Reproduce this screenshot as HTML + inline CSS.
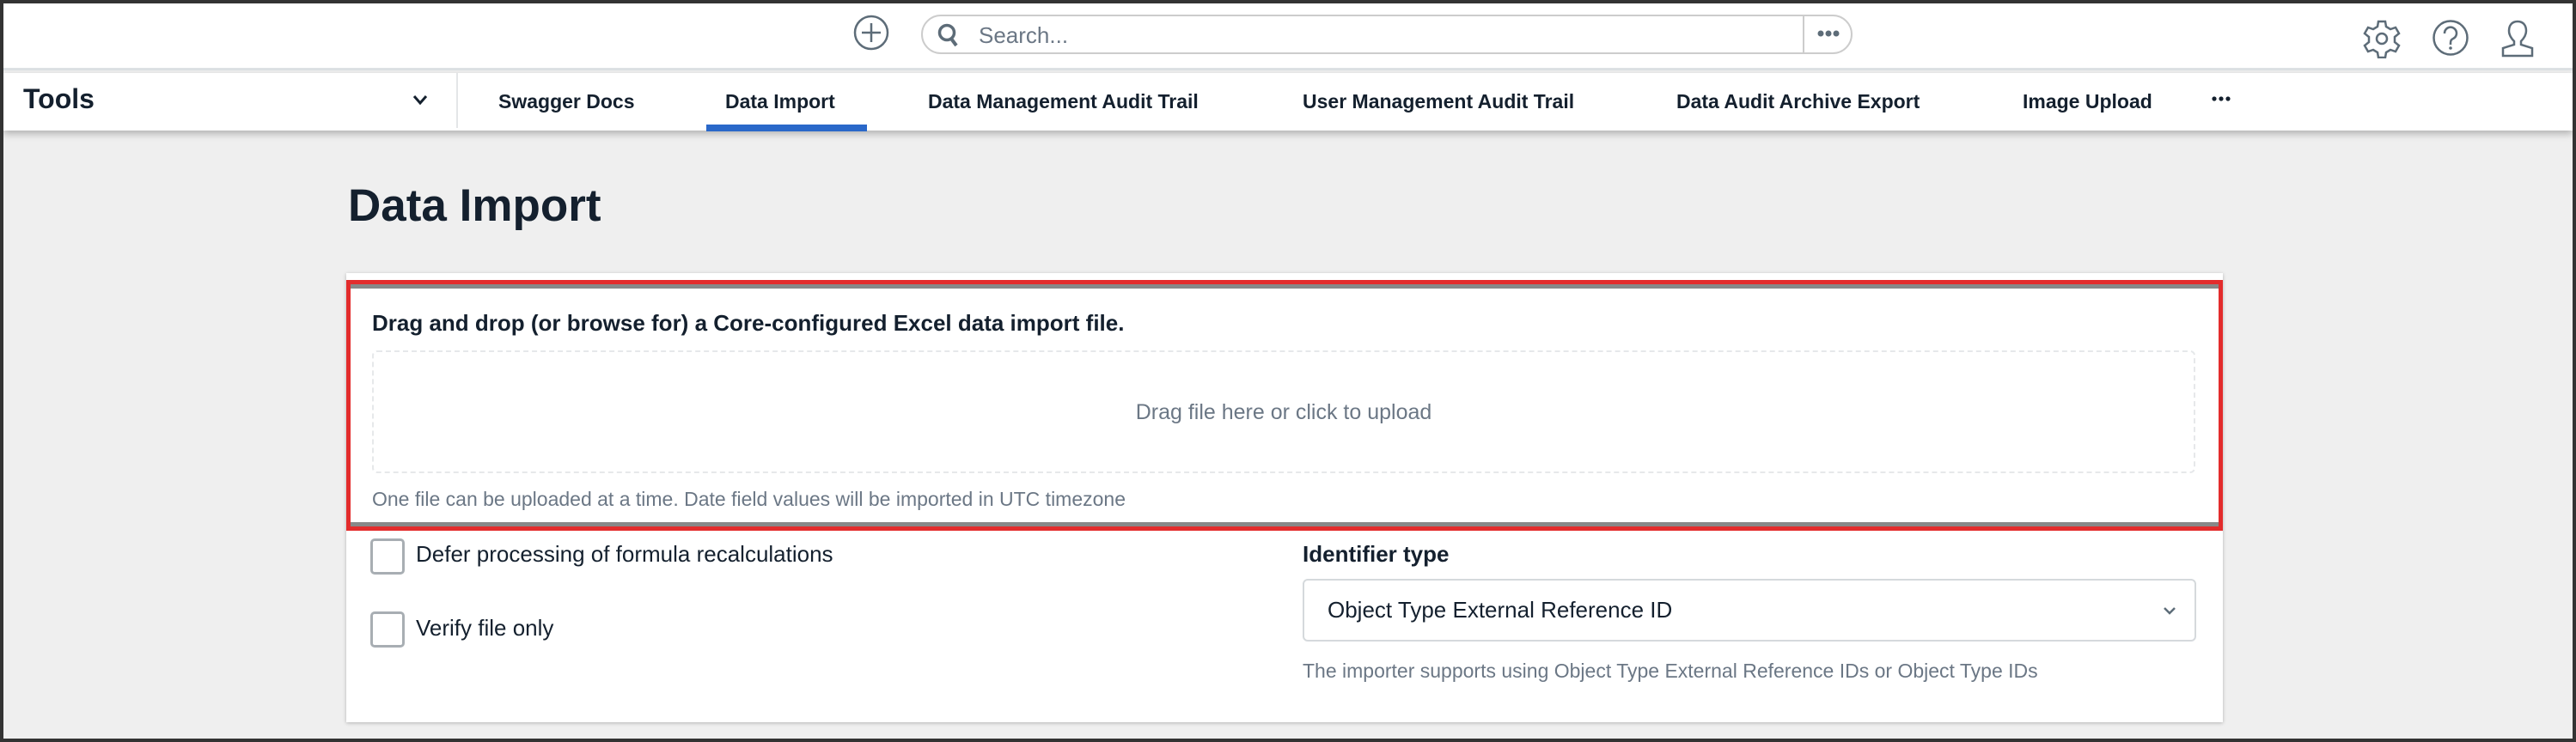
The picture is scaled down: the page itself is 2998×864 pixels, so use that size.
<!DOCTYPE html>
<html><head><meta charset="utf-8"><style>
*{margin:0;padding:0;box-sizing:border-box}
body{width:2998px;height:864px;overflow:hidden;font-family:"Liberation Sans",sans-serif;background:#333;position:relative}
.frame{position:absolute;left:4px;top:4px;width:2990px;height:856px;background:#efefef;overflow:hidden}
.hdr{position:absolute;left:0;top:0;width:100%;height:78px;background:#fff;border-bottom:3px solid #dde1e4}
.nav{position:absolute;left:0;top:81px;width:100%;height:67px;background:#fff;box-shadow:0 4px 8px rgba(0,0,0,.25)}
.abs{position:absolute}
.ni{position:absolute;top:20px;font-size:23px;font-weight:bold;color:#14202e;white-space:nowrap}
.card{position:absolute;left:399px;top:314px;width:2184px;height:523px;background:#fff;box-shadow:0 1px 4px rgba(0,0,0,.25)}
</style></head><body>
<div class="frame">
<div class="hdr">
  <svg class="abs" style="left:989px;top:13px" width="42" height="42" viewBox="0 0 42 42"><circle cx="21" cy="21" r="19" fill="none" stroke="#5d6c78" stroke-width="2.5"/><path d="M21 10v22M10 21h22" stroke="#5d6c78" stroke-width="2.5"/></svg>
  <div class="abs" style="left:1068px;top:13px;width:1084px;height:46px;border:2px solid #ccc;border-radius:23px;background:#fff"></div>
  <div class="abs" style="left:2094px;top:15px;width:2px;height:42px;background:#ccc"></div>
  <svg class="abs" style="left:1086px;top:22px" width="28" height="30" viewBox="0 0 28 30"><circle cx="12" cy="12" r="8.5" fill="none" stroke="#5d6c78" stroke-width="3.5"/><path d="M17 19l6 8" stroke="#5d6c78" stroke-width="4"/></svg>
  <div class="abs" style="left:1135px;top:22px;font-size:26px;color:#6b7785">Search...</div>
  <svg class="abs" style="left:2110px;top:28px" width="28" height="14" viewBox="0 0 28 14"><circle cx="5" cy="7" r="3.5" fill="#5d6c78"/><circle cx="14" cy="7" r="3.5" fill="#5d6c78"/><circle cx="23" cy="7" r="3.5" fill="#5d6c78"/></svg>
  <svg class="abs" style="left:2746px;top:18px" width="44" height="46" viewBox="0 0 44 46"><path d="M18 3h8l1 6 5 3 6-2 4 7-5 4v6l5 4-4 7-6-2-5 3-1 6h-8l-1-6-5-3-6 2-4-7 5-4v-6l-5-4 4-7 6 2 5-3z" fill="none" stroke="#5d6c78" stroke-width="2.5"/><circle cx="22" cy="23" r="6" fill="none" stroke="#5d6c78" stroke-width="2.5"/></svg>
  <svg class="abs" style="left:2826px;top:18px" width="44" height="44" viewBox="0 0 44 44"><circle cx="22" cy="22" r="19.5" fill="none" stroke="#5d6c78" stroke-width="2.5"/><path d="M15 17a7 7 0 1 1 10 6c-2 1-3 2-3 5v2" fill="none" stroke="#5d6c78" stroke-width="2.5"/><circle cx="22" cy="34" r="1.8" fill="#5d6c78"/></svg>
  <svg class="abs" style="left:2904px;top:18px" width="44" height="46" viewBox="0 0 44 46"><path d="M22 3c-7 0-10 5-10 11 0 5 3 9 6 12v4L5 34v9h34v-9l-13-4v-4c3-3 6-7 6-12 0-6-3-11-10-11z" fill="none" stroke="#5d6c78" stroke-width="2.5"/></svg>
</div>
<div class="nav">
  <div class="abs" style="left:23px;top:12px;font-size:32px;font-weight:bold;color:#14202e">Tools</div>
  <svg class="abs" style="left:476px;top:24px" width="18" height="14" viewBox="0 0 18 14"><path d="M2 3l7 8 7-8" fill="none" stroke="#14202e" stroke-width="3"/></svg>
  <div class="abs" style="left:527px;top:0;width:2px;height:64px;background:#e4e6e8"></div>
  <div class="ni" style="left:576px">Swagger Docs</div>
  <div class="ni" style="left:840px">Data Import</div>
  <div class="abs" style="left:818px;top:60px;width:187px;height:8px;background:#2a68c9"></div>
  <div class="ni" style="left:1076px">Data Management Audit Trail</div>
  <div class="ni" style="left:1512px">User Management Audit Trail</div>
  <div class="ni" style="left:1947px">Data Audit Archive Export</div>
  <div class="ni" style="left:2350px">Image Upload</div>
  <svg class="abs" style="left:2570px;top:26px" width="22" height="8" viewBox="0 0 22 8"><circle cx="3" cy="4" r="2.6" fill="#14202e"/><circle cx="11" cy="4" r="2.6" fill="#14202e"/><circle cx="19" cy="4" r="2.6" fill="#14202e"/></svg>
</div>
<div class="abs" style="left:401px;top:205px;font-size:53px;font-weight:bold;color:#14202e">Data Import</div>
<div class="card">
  <div class="abs" style="left:0;top:8px;width:2184px;height:292px;border:5px solid #e32c2c;box-shadow:inset 0 5px 0 #888, inset 0 -5px 0 #888"></div>
  <div class="abs" style="left:30px;top:43px;font-size:26px;font-weight:bold;color:#14202e">Drag and drop (or browse for) a Core-configured Excel data import file.</div>
  <div class="abs" style="left:30px;top:90px;width:2122px;height:143px;border:2px dashed #e6e8ea;border-radius:6px"></div>
  <div class="abs" style="left:30px;top:148px;width:2122px;text-align:center;font-size:25px;color:#6b7785">Drag file here or click to upload</div>
  <div class="abs" style="left:30px;top:250px;font-size:23px;color:#6b7785">One file can be uploaded at a time. Date field values will be imported in UTC timezone</div>
  <div class="abs" style="left:28px;top:309px;width:40px;height:42px;border:3px solid #a8aeb3;border-radius:5px"></div>
  <div class="abs" style="left:81px;top:312px;font-size:26px;color:#14202e">Defer processing of formula recalculations</div>
  <div class="abs" style="left:28px;top:394px;width:40px;height:42px;border:3px solid #a8aeb3;border-radius:5px"></div>
  <div class="abs" style="left:81px;top:398px;font-size:26px;color:#14202e">Verify file only</div>
  <div class="abs" style="left:1113px;top:312px;font-size:26px;font-weight:bold;color:#14202e">Identifier type</div>
  <div class="abs" style="left:1113px;top:356px;width:1040px;height:73px;border:2px solid #d5d9dc;border-radius:6px"></div>
  <div class="abs" style="left:1142px;top:377px;font-size:26px;color:#14202e">Object Type External Reference ID</div>
  <svg class="abs" style="left:2113px;top:387px" width="18" height="12" viewBox="0 0 18 12"><path d="M3 3l6 6 6-6" fill="none" stroke="#5d6c78" stroke-width="2.5"/></svg>
  <div class="abs" style="left:1113px;top:450px;font-size:23px;color:#6b7785">The importer supports using Object Type External Reference IDs or Object Type IDs</div>
</div>
</div>
</body></html>
